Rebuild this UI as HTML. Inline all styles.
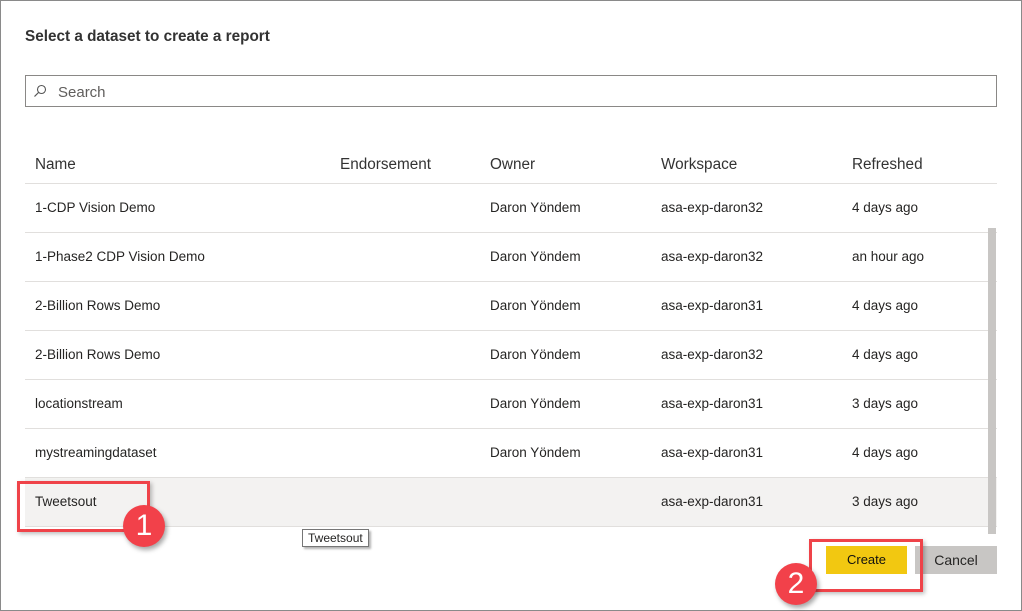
<!DOCTYPE html><html><head><style>
body{margin:0;width:1022px;height:611px;background:#fff;font-family:"Liberation Sans",sans-serif;position:relative;overflow:hidden;color:#252423}
.a{position:absolute}
.frame{left:0;top:0;width:1020px;height:609px;border:1px solid #8a8a8a}
.row{position:absolute;left:25px;width:972px;height:48px;border-bottom:1px solid #e1dfdd;font-size:13.5px}
.row span{position:absolute;top:16px}
.h span{font-size:15.3px;color:#333;top:1px}
.c1{left:10px}.c2{left:315px}.c3{left:465px}.c4{left:636px}.c5{left:827px}
.badge{width:42px;height:42px;border-radius:50%;background:#f2414a;color:#fff;font-size:30px;text-align:center;line-height:42px;box-shadow:2px 3px 5px rgba(0,0,0,.35)}
.box{border:3px solid #ef4349;box-shadow:2px 2px 4px rgba(0,0,0,.25)}
</style></head><body>
<div class="a frame"></div>
<div class="a" style="left:25px;top:28px;font-size:15.3px;font-weight:bold;color:#333">Select a dataset to create a report</div>
<div class="a" style="left:25px;top:75px;width:970px;height:30px;border:1px solid #8a8886"></div>
<svg class="a" style="left:33px;top:84px" width="14" height="14" viewBox="0 0 14 14"><circle cx="8.5" cy="5.5" r="4" fill="none" stroke="#555" stroke-width="1.1"/><path d="M5.5 8.5L1.5 12.5" stroke="#555" stroke-width="1.2"/></svg>
<div class="a" style="left:58px;top:84px;font-size:15px;color:#605e5c">Search</div>
<div class="row h" style="top:155px;height:28px"><span class="c1">Name</span><span class="c2">Endorsement</span><span class="c3">Owner</span><span class="c4">Workspace</span><span class="c5">Refreshed</span></div>
<div class="row" style="top:184px"><span class="c1">1-CDP Vision Demo</span><span class="c3">Daron Yöndem</span><span class="c4">asa-exp-daron32</span><span class="c5">4 days ago</span></div>
<div class="row" style="top:233px"><span class="c1">1-Phase2 CDP Vision Demo</span><span class="c3">Daron Yöndem</span><span class="c4">asa-exp-daron32</span><span class="c5">an hour ago</span></div>
<div class="row" style="top:282px"><span class="c1">2-Billion Rows Demo</span><span class="c3">Daron Yöndem</span><span class="c4">asa-exp-daron31</span><span class="c5">4 days ago</span></div>
<div class="row" style="top:331px"><span class="c1">2-Billion Rows Demo</span><span class="c3">Daron Yöndem</span><span class="c4">asa-exp-daron32</span><span class="c5">4 days ago</span></div>
<div class="row" style="top:380px"><span class="c1">locationstream</span><span class="c3">Daron Yöndem</span><span class="c4">asa-exp-daron31</span><span class="c5">3 days ago</span></div>
<div class="row" style="top:429px"><span class="c1">mystreamingdataset</span><span class="c3">Daron Yöndem</span><span class="c4">asa-exp-daron31</span><span class="c5">4 days ago</span></div>
<div class="row" style="top:477px;background:#f3f2f1;border-top:1px solid #e1dfdd"><span class="c1">Tweetsout</span><span class="c4">asa-exp-daron31</span><span class="c5">3 days ago</span></div>
<div class="a" style="left:988px;top:228px;width:8px;height:306px;background:#c8c6c4"></div>
<div class="a box" style="left:17px;top:481px;width:127px;height:45px"></div>
<div class="a badge" style="left:123px;top:505px">1</div>
<div class="a" style="left:302px;top:529px;padding:1px 5px;border:1px solid #767676;background:#fff;font-size:12px;box-shadow:2px 2px 2px rgba(0,0,0,.3)">Tweetsout</div>
<div class="a" style="left:826px;top:546px;width:81px;height:28px;background:#f2c811;font-size:13px;text-align:center;line-height:28px;color:#111">Create</div>
<div class="a" style="left:915px;top:546px;width:82px;height:28px;background:#c8c6c4;font-size:14px;text-align:center;line-height:28px">Cancel</div>
<div class="a box" style="left:809px;top:539px;width:108px;height:47px"></div>
<div class="a badge" style="left:775px;top:563px">2</div>
</body></html>
